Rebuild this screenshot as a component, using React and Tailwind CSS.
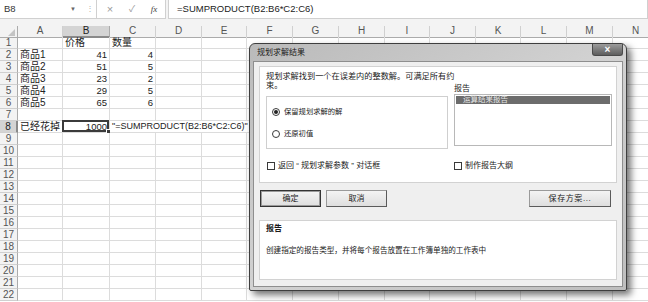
import React from 'react'

const GRID = 'grid grid-cols-[18px_45px_47px_46px_46px_45px_46px_46px_46px_45px_46px_45px_46px_46px_46px]'
const COLS = ['A', 'B', 'C', 'D', 'E', 'F', 'G', 'H', 'I', 'J', 'K', 'L', 'M', 'N']

const CELLS = {
  1: { B: '价格', C: '数量' },
  2: { A: '商品1', B: 41, C: 4 },
  3: { A: '商品2', B: 51, C: 5 },
  4: { A: '商品3', B: 23, C: 2 },
  5: { A: '商品4', B: 29, C: 5 },
  6: { A: '商品5', B: 65, C: 6 },
  8: { A: '已经花掉', B: 1000 },
}

const ROWS = Array.from({ length: 22 }, (_, i) => i + 1)

function Cell({ row, col }) {
  const v = CELLS[row]?.[col]
  const isNum = typeof v === 'number'
  return (
    <div
      className={`relative h-[12px] border-r border-b border-[#dcdcdc] leading-[11px] text-[#222] whitespace-nowrap ${
        isNum ? 'text-right pr-[2px] text-[9.5px]' : 'pl-[2px] text-[10px]'
      }`}
    >
      {v}
      {row === 8 && col === 'B' && (
        <div className="absolute -left-[1px] -top-[1px] right-0 bottom-0 border-2 border-[#3b3b3b]">
          <div className="absolute -right-[4px] -bottom-[4px] w-[5px] h-[5px] bg-[#3b3b3b] border border-white" />
        </div>
      )}
      {row === 8 && col === 'C' && (
        <span className="absolute left-[2px] top-0 z-10 h-[11px] bg-white pr-[2px] text-[9px]">"=SUMPRODUCT(B2:B6*C2:C6)"</span>
      )}
    </div>
  )
}

function Radio({ checked }) {
  return (
    <span className="w-[8px] h-[8px] rounded-full border border-[#3a3a3a] bg-white flex items-center justify-center">
      {checked && <span className="w-[4px] h-[4px] rounded-full bg-[#222]" />}
    </span>
  )
}

function Checkbox() {
  return <span className="w-[8px] h-[8px] border border-[#3a3a3a] bg-white" />
}

function Button({ children, primary, className = '' }) {
  return (
    <div
      className={`h-[17px] flex items-center justify-center text-[8px] text-[#222] bg-linear-to-b from-[#f4f4f4] to-[#dedede] ${
        primary ? 'border border-[#333] shadow-[inset_0_0_0_1px_#9a9a9a]' : 'border border-[#9a9a9a] border-r-[#5a5a5a] border-b-[#5a5a5a]'
      } ${className}`}
    >
      {children}
    </div>
  )
}

function SolverDialog() {
  return (
    <div className="absolute left-[249px] top-[43px] z-20 w-[378px] h-[248px] flex flex-col rounded-t-[6px] rounded-b-[2px] border border-[#3e3e3e] bg-linear-to-br from-[#bababa] via-[#d2d2d2] to-[#bebebe] shadow-[4px_4px_7px_rgba(0,0,0,0.55)]">
      <div className="relative h-[17px] flex items-center pl-[7px] text-[8px] text-[#1a1a1a]">
        规划求解结果
        <div className="absolute right-[3px] top-0 w-[31px] h-[12px] rounded-b-[3px] border border-[#4a4a4a] border-t-0 bg-linear-to-b from-[#9c9c9c] to-[#5e5e5e] flex items-center justify-center text-[10px] leading-none font-bold text-white">
          ×
        </div>
      </div>
      <div className="flex-1 mx-[3px] mb-[3px] border border-[#8e8e8e] bg-[#efefef] px-[5px] pt-[4px] pb-[6px] flex flex-col">
        <div className="h-[117px] bg-white border border-[#d2d2d2] flex flex-col">
          <div className="flex">
            <div className="w-[188px] pl-[6px]">
              <div className="w-[192px] pt-[5px] text-[8.2px] leading-[9px] text-[#1a1a1a]">
                规划求解找到一个在误差内的整数解。可满足所有约束。
              </div>
              <div className="mt-[6px] h-[53px] border border-[#cfcfcf] flex flex-col pl-[5px] pt-[10px] gap-[11px] text-[7.3px] text-[#1a1a1a]">
                <div className="flex items-center gap-[4px]">
                  <Radio checked />
                  保留规划求解的解
                </div>
                <div className="flex items-center gap-[4px]">
                  <Radio />
                  还原初值
                </div>
              </div>
            </div>
            <div className="ml-[6px] w-[158px] pt-[17px]">
              <div className="h-[10px] leading-[10px] text-[8px] text-[#1a1a1a]">报告</div>
              <div className="h-[52px] border border-[#b8b8b8] bg-white p-[1px]">
                <div className="h-[8px] bg-[#6c6c6c] pl-[7px] text-[7.5px] leading-[8px] text-[#e6e6e6]">运算结果报告</div>
              </div>
            </div>
          </div>
          <div className="flex mt-[11px] text-[8px] text-[#1a1a1a]">
            <div className="w-[194px] pl-[7px] flex items-center gap-[3px] whitespace-pre">
              <Checkbox />
              {'返回 “ 规划求解参数 ” 对话框'}
            </div>
            <div className="flex items-center gap-[3px]">
              <Checkbox />
              制作报告大纲
            </div>
          </div>
        </div>
        <div className="mt-[7px] flex pl-[1px] pr-[6px]">
          <Button primary className="w-[61px]">确定</Button>
          <Button className="ml-[5px] w-[61px]">取消</Button>
          <Button className="ml-auto w-[82px] tracking-[0.6px]">保存方案...</Button>
        </div>
        <div className="mt-[13px] h-[60px] bg-white border border-[#d2d2d2] pl-[6px] pt-[3px] text-[#1a1a1a]">
          <div className="text-[8px] leading-[10px] font-bold">报告</div>
          <div className="mt-[12px] text-[7.6px] leading-[9px] whitespace-nowrap">
            创建指定的报告类型，并将每个报告放置在工作簿单独的工作表中
          </div>
        </div>
      </div>
    </div>
  )
}

export default function App() {
  return (
    <div className="relative w-[648px] h-[302px] overflow-hidden bg-white font-['Liberation_Sans','Noto_Sans_CJK_SC',sans-serif]">
      <div className="h-[26px] bg-[#f3f3f3] flex items-start">
        <div className="h-[19px] w-[84px] bg-white border-b border-[#d0d0d0] flex items-center justify-between pl-[4px] pr-[8px] text-[9.5px] text-[#333]">
          B8
          <span className="text-[6px] text-[#666]">▼</span>
        </div>
        <div className="w-[12px] h-[19px] flex items-center justify-center text-[8px] text-[#b0b0b0] bg-white border-b border-[#d0d0d0]">⋮</div>
        <div className="h-[19px] w-[70px] bg-white border border-t-0 border-[#d0d0d0] flex items-center justify-around pl-[2px] text-[#9a9a9a]">
          <span className="text-[11px] leading-none">×</span>
          <span className="text-[9px] leading-none">✓</span>
          <span className="text-[9px] italic leading-none text-[#444] font-['Liberation_Serif',serif]">fx</span>
        </div>
        <div className="ml-[2px] flex-1 h-[19px] bg-white border border-t-0 border-[#d0d0d0] pl-[8px] flex items-center text-[9.5px] text-[#222]">
          =SUMPRODUCT(B2:B6*C2:C6)
        </div>
      </div>
      <div className={`${GRID} h-[11px]`}>
        <div className="relative bg-[#f3f3f3] border-r border-b border-[#ababab]">
          <span className="absolute right-[2px] bottom-[1px] w-0 h-0 border-l-[7px] border-l-transparent border-b-[7px] border-b-[#c4c4c4]" />
        </div>
        {COLS.map((c) => (
          <div
            key={c}
            className={`text-center text-[10px] leading-[10px] border-r ${
              c === 'B'
                ? 'bg-[#d4d4d4] text-[#222] border-[#ababab] border-b-2 border-b-[#8a8a8a]'
                : 'bg-[#f3f3f3] text-[#555] border-[#d0d0d0] border-b border-b-[#ababab]'
            }`}
          >
            {c}
          </div>
        ))}
      </div>
      {ROWS.map((r) => (
        <div key={r} className={GRID}>
          <div
            className={`h-[12px] text-center text-[10px] leading-[11px] border-b border-[#d0d0d0] ${
              r === 8
                ? 'bg-[#d4d4d4] text-[#222] border-r-2 border-r-[#8a8a8a]'
                : 'bg-[#f3f3f3] text-[#555] border-r border-r-[#ababab]'
            }`}
          >
            {r}
          </div>
          {COLS.map((c) => (
            <Cell key={c} row={r} col={c} />
          ))}
        </div>
      ))}
      <SolverDialog />
    </div>
  )
}
